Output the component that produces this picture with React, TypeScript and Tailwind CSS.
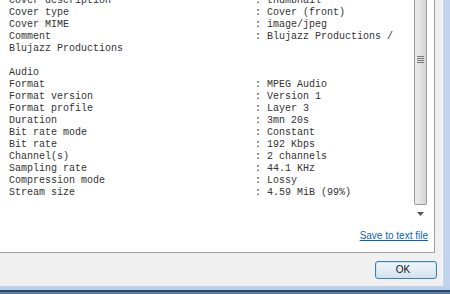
const rows: [string, string | null][] = [
  ["Cover description", "thumbnail"],
  ["Cover type", "Cover (front)"],
  ["Cover MIME", "image/jpeg"],
  ["Comment", "Blujazz Productions /"],
  ["Blujazz Productions", null],
  ["", null],
  ["Audio", null],
  ["Format", "MPEG Audio"],
  ["Format version", "Version 1"],
  ["Format profile", "Layer 3"],
  ["Duration", "3mn 20s"],
  ["Bit rate mode", "Constant"],
  ["Bit rate", "192 Kbps"],
  ["Channel(s)", "2 channels"],
  ["Sampling rate", "44.1 KHz"],
  ["Compression mode", "Lossy"],
  ["Stream size", "4.59 MiB (99%)"],
]

function ScrollBar() {
  return (
    <div className="w-[17px] flex flex-col">
      {/* thumb, scrolled so its top is off screen */}
      <div className="flex-1 px-[2px]">
        <div className="h-full border border-t-0 border-[#9a9a9a] rounded-b-[2px] bg-[linear-gradient(90deg,#ececec,#e2e2e2_50%,#d2d2d2)] flex flex-col items-center pt-[56px]">
          <div className="w-[7px] flex flex-col gap-[1px]">
            <div className="h-px bg-[#7a7a7a]" />
            <div className="h-px bg-[#7a7a7a]" />
            <div className="h-px bg-[#7a7a7a]" />
            <div className="h-px bg-[#7a7a7a]" />
          </div>
        </div>
      </div>
      <div className="h-[17px] flex items-center justify-center">
        <svg width="7" height="4" viewBox="0 0 7 4">
          <path d="M0 0h7L3.5 4z" fill="#555" />
        </svg>
      </div>
    </div>
  )
}

export default function App() {
  return (
    <div className="w-[450px] h-[294px] overflow-hidden flex flex-col bg-[#c0d5ed]" style={{ fontFamily: '"Liberation Sans", Arial, sans-serif' }}>
      <div className="flex h-[286px]">
        <div className="w-[442px] bg-[#f0f0f0] flex flex-col">
          {/* info panel */}
          <div className="w-[435px] h-[253px] bg-white border-r border-b border-[#a0a0a0] flex flex-col">
            <div className="flex h-[222px]">
              <div className="w-[412px] overflow-hidden pl-[9px]">
                <div className="-mt-[5px] text-[10px] leading-[12px] text-[#333] whitespace-pre" style={{ fontFamily: '"Liberation Mono", "Courier New", monospace' }}>
                  {rows.map(([k, v], i) => (
                    <div key={i} className="h-[12px]">
                      {v === null ? k || " " : k.padEnd(41, " ") + ": " + v}
                    </div>
                  ))}
                </div>
              </div>
              <ScrollBar />
            </div>
            <div className="flex justify-end pr-[6px] pt-[8px]">
              <a href="#" className="text-[10px] leading-[12px] text-[#0b5fc4] underline">
                Save to text file
              </a>
            </div>
          </div>

          <div className="flex justify-end pr-[5px] pt-[8px]">
            <button className="w-[62px] h-[18px] rounded-[3px] border border-[#3c7fb1] bg-[linear-gradient(#f0f6fb,#e3ecf4_50%,#d4e0ea)] shadow-[inset_0_0_0_1px_#c8e4f8] text-[10px] leading-none text-[#111] pr-[6px]">
              OK
            </button>
          </div>
        </div>
        <div className="w-px bg-[#f6f9fd]" />
        <div className="flex-1 bg-[#c0d5ed]" />
      </div>

      {/* window frame bottom */}
      <div className="h-[4px] bg-[#b9d1ea]" />
      <div className="h-[2px] bg-[#24496a]" />
      <div className="h-[2px] bg-[#5e80a4]" />
    </div>
  )
}
